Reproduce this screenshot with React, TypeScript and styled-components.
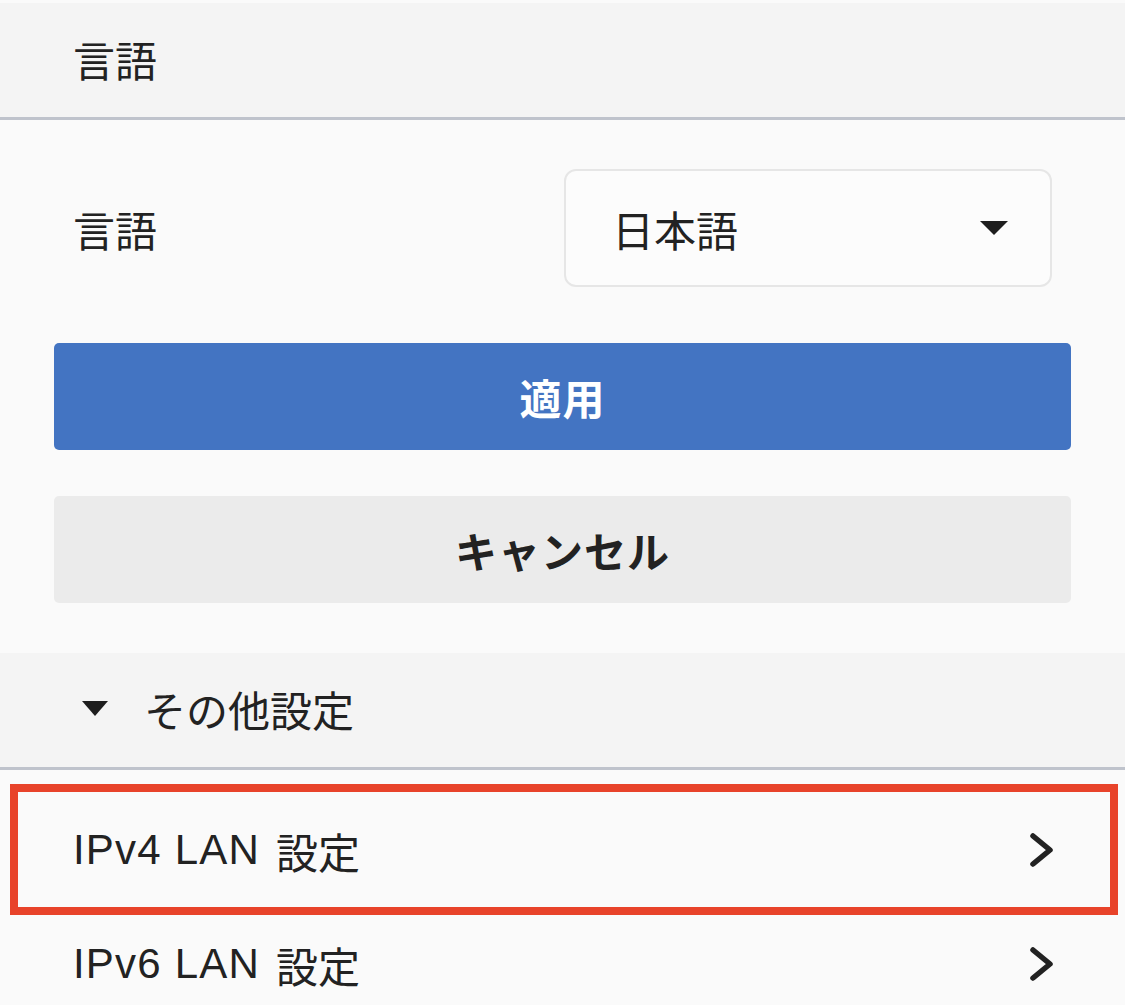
import React from "react";
import styled, { createGlobalStyle } from "styled-components";

const Global = createGlobalStyle`
  html, body { margin: 0; padding: 0; background: #fafafa; }
  body {
    font-family: "Liberation Sans", "Noto Sans CJK JP", sans-serif;
    color: #222;
    padding-top: 3px;
  }
  * { box-sizing: border-box; }
`;

const SectionHeader = styled.div<{ $indent?: number }>`
  height: 117px;
  background: #f4f4f4;
  border-bottom: 3px solid #bfc3cc;
  display: flex;
  align-items: center;
  padding-left: ${(p) => p.$indent ?? 73}px;
  padding-bottom: 4px;
  font-size: 42px;
  gap: 36px;
`;

const Body = styled.div`
  padding: 49px 54px 50px;
  display: flex;
  flex-direction: column;
`;

const FieldRow = styled.div`
  display: flex;
  align-items: center;
  justify-content: space-between;
  padding: 0 19px 0 19px;
  margin-bottom: 56px;
`;

const Label = styled.span`
  font-size: 42px;
`;

const Select = styled.div`
  width: 488px;
  height: 118px;
  border: 2px solid #e6e6e6;
  border-radius: 12px;
  background: #fcfcfc;
  display: flex;
  align-items: center;
  justify-content: space-between;
  padding: 0 42px 0 46px;
  font-size: 42px;
`;

const Button = styled.button<{ $primary?: boolean }>`
  height: 107px;
  border: none;
  border-radius: 5px;
  background: ${(p) => (p.$primary ? "#4374c2" : "#ebebeb")};
  color: ${(p) => (p.$primary ? "#fff" : "#222")};
  font-family: "Noto Sans CJK JP", sans-serif;
  font-size: 42px;
  font-weight: 700;
  letter-spacing: 1px;
  margin-bottom: ${(p) => (p.$primary ? "46px" : "0")};
`;

const List = styled.div`
  padding-top: 23px;
`;

const Row = styled.div<{ $highlight?: boolean }>`
  height: 114px;
  display: flex;
  align-items: center;
  justify-content: space-between;
  padding: 0 70px 0 73px;
  font-size: 42px;
  position: relative;
  &::after {
    content: "";
    display: ${(p) => (p.$highlight ? "block" : "none")};
    position: absolute;
    left: 10px;
    right: 7px;
    top: -9px;
    bottom: -8px;
    border: 8px solid #e8432a;
    pointer-events: none;
  }
`;

const RowLabel = styled.span`
  display: flex;
  align-items: center;
  gap: 16px;
`;

const Latin = styled.span`
  letter-spacing: 1.2px;
`;

const Caret = () => (
  <svg width="28" height="14" viewBox="0 0 28 14">
    <path d="M0 0 L28 0 L14 14 Z" fill="#1e1e1e" />
  </svg>
);

const SmallCaret = () => (
  <svg width="26" height="15" viewBox="0 0 26 15">
    <path d="M0 0 L26 0 L13 15 Z" fill="#1e1e1e" />
  </svg>
);

const Chevron = () => (
  <svg width="26" height="34" viewBox="0 0 26 34">
    <path d="M4 3 L21 17 L4 31" fill="none" stroke="#222" strokeWidth="5.5" strokeLinecap="round" strokeLinejoin="round" />
  </svg>
);

export default function App() {
  return (
    <>
      <Global />
      <SectionHeader>言語</SectionHeader>
      <Body>
        <FieldRow>
          <Label>言語</Label>
          <Select>
            <span>日本語</span>
            <Caret />
          </Select>
        </FieldRow>
        <Button $primary>適用</Button>
        <Button>キャンセル</Button>
      </Body>
      <SectionHeader $indent={82}>
        <SmallCaret />
        <span>その他設定</span>
      </SectionHeader>
      <List>
        <Row $highlight>
          <RowLabel>
            <Latin>IPv4 LAN</Latin>
            <span>設定</span>
          </RowLabel>
          <Chevron />
        </Row>
        <Row>
          <RowLabel>
            <Latin>IPv6 LAN</Latin>
            <span>設定</span>
          </RowLabel>
          <Chevron />
        </Row>
      </List>
    </>
  );
}
